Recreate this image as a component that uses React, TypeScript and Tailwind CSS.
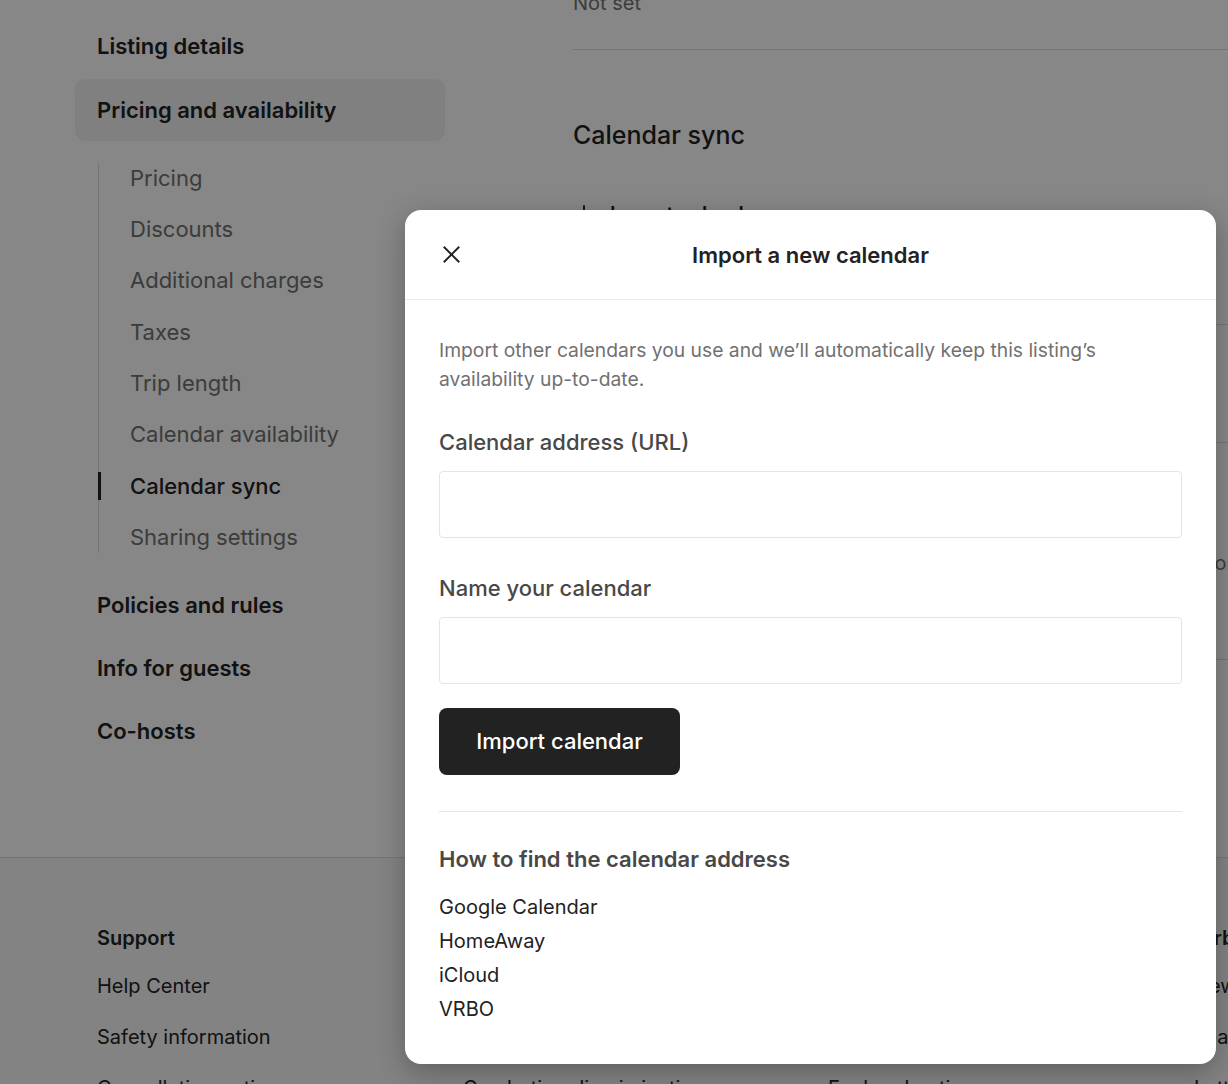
const font = { fontFamily: "Inter, 'Noto Sans', sans-serif" };

const subItems = [
  "Pricing",
  "Discounts",
  "Additional charges",
  "Taxes",
  "Trip length",
  "Calendar availability",
  "Calendar sync",
  "Sharing settings",
];

const footerCols = [
  { title: "Support", links: ["Help Center", "Safety information", "Cancellation options"] },
  { title: "Community", links: ["Airbnb.org: disaster relief housing", "Support Afghan refugees", "Combating discrimination"] },
  { title: "Hosting", links: ["Try hosting", "AirCover for Hosts", "Explore hosting resources"] },
  { title: "Airbnb", links: ["Newsroom", "Learn about new features", "Letter from our founders"] },
];

function Sidebar() {
  return (
    <nav className="flex w-[370px] shrink-0 flex-col pt-[15px]">
      <div className="flex h-[62px] items-center px-[22px] text-[22px] font-semibold text-[#222222]">
        Listing details
      </div>
      <div className="mt-[2px] flex h-[62px] items-center rounded-[10px] bg-[#f2f2f2] px-[22px] text-[22px] font-semibold text-[#222222]">
        Pricing and availability
      </div>
      <ul className="my-[22px] ml-[23px] flex flex-col gap-[21.4px] border-l border-[#dddddd]">
        {subItems.map((item) => {
          const active = item === "Calendar sync";
          return (
            <li
              key={item}
              className={
                active
                  ? "relative flex h-[30px] items-center pl-[31px] text-[22px] font-medium text-[#222222]"
                  : "flex h-[30px] items-center pl-[31px] text-[22px] text-[#717171]"
              }
            >
              {active && (
                <span className="absolute top-[1px] left-[-1px] h-[28px] w-[3px] bg-[#222222]" />
              )}
              {item}
            </li>
          );
        })}
      </ul>
      {["Policies and rules", "Info for guests", "Co-hosts"].map((item) => (
        <div
          key={item}
          className="mb-[1px] flex h-[62px] items-center px-[22px] text-[22px] font-semibold text-[#222222]"
        >
          {item}
        </div>
      ))}
    </nav>
  );
}

function MainContent() {
  return (
    <main className="ml-[128px] w-[720px] shrink-0">
      <div className="-mt-[11px] border-b border-[#dddddd] pb-[32px] text-[20px] leading-[28px] text-[#717171]">
        Not set
      </div>
      <h2 className="mt-[69px] text-[25px] leading-[32px] font-medium text-[#222222]">
        Calendar sync
      </h2>
      <div className="mt-[49px] flex h-[28px] items-center gap-[16px] pl-[1px] text-[20px] font-semibold text-[#222222]">
        <svg viewBox="0 0 32 32" className="h-[20px] w-[20px]" fill="none" stroke="#222222" strokeWidth="3">
          <path d="M2 16h28M16 2v28" />
        </svg>
        <span className="underline">Import calendar</span>
      </div>
      <div className="h-[97px] border-b border-[#dddddd]" />
      <div className="h-[118px] border-b border-[#dddddd]" />
      <div className="h-[217px] border-b border-[#dddddd] pt-[106px]">
        <p className="text-[20px] leading-[28px] whitespace-nowrap text-[#717171]">
          Link the calendar of this listing with calendars you use for bookings or
        </p>
      </div>
    </main>
  );
}

function Footer() {
  return (
    <footer className="grid h-[227px] grid-cols-[366px_365px_366px_365px] border-t border-[#dddddd] bg-[#f7f7f7] pt-[66px] pl-[97px]">
      {footerCols.map((col) => (
        <div key={col.title} className="flex flex-col">
          <h3 className="text-[20px] leading-[28px] font-semibold whitespace-nowrap text-[#222222]">{col.title}</h3>
          <ul className="mt-[20px] flex flex-col gap-[23px]">
            {col.links.map((l) => (
              <li key={l} className="text-[20px] leading-[28px] whitespace-nowrap text-[#222222]">
                {l}
              </li>
            ))}
          </ul>
        </div>
      ))}
    </footer>
  );
}

function ImportModal() {
  return (
    <div className="absolute top-[210px] left-[405px] w-[811px] rounded-[16px] bg-white shadow-[0_8px_28px_rgba(0,0,0,0.28)]">
      <header className="relative flex h-[90px] items-center justify-center border-b border-[#ebebeb]">
        <button className="absolute left-[37px] flex h-[19px] w-[19px] items-center justify-center">
          <svg viewBox="0 0 32 32" className="h-[19px] w-[19px]" fill="none" stroke="#222222" strokeWidth="3.2">
            <path d="m3 3 26 26M29 3 3 29" />
          </svg>
        </button>
        <h1 className="text-[22px] leading-[28px] font-semibold text-[#222222]">Import a new calendar</h1>
      </header>
      <div className="px-[34px] pt-[36px] pb-[38px]">
        <p className="text-[19.3px] leading-[29px] text-[#717171]">
          Import other calendars you use and we’ll automatically keep this listing’s availability up-to-date.
        </p>
        <label className="mt-[34px] block text-[22px] leading-[28px] font-medium text-[#484848]">
          Calendar address (URL)
        </label>
        <input className="mt-[15px] block h-[67px] w-full rounded-[4px] border border-[#e4e4e4] px-[12px] text-[20px] outline-none" />
        <label className="mt-[36px] block text-[22px] leading-[28px] font-medium text-[#484848]">
          Name your calendar
        </label>
        <input className="mt-[15px] block h-[67px] w-full rounded-[4px] border border-[#e4e4e4] px-[12px] text-[20px] outline-none" />
        <button className="mt-[24px] flex h-[67px] w-[241px] items-center justify-center rounded-[8px] bg-[#222222] text-[22px] font-medium text-white">
          Import calendar
        </button>
        <div className="mt-[36px] border-t border-[#e4e4e4]" />
        <h2 className="mt-[33px] text-[22px] leading-[28px] font-semibold text-[#484848]">
          How to find the calendar address
        </h2>
        <ul className="mt-[17px] flex flex-col">
          {["Google Calendar", "HomeAway", "iCloud", "VRBO"].map((item) => (
            <li key={item} className="text-[20px] leading-[34px] text-[#222222]">
              {item}
            </li>
          ))}
        </ul>
      </div>
    </div>
  );
}

export default function App() {
  return (
    <div className="relative h-[1084px] w-[1228px] overflow-hidden bg-white" style={font}>
      <div className="flex h-[857px] pl-[75px]">
        <Sidebar />
        <MainContent />
      </div>
      <Footer />
      <div className="absolute inset-0 bg-black/[0.47]" />
      <ImportModal />
    </div>
  );
}
